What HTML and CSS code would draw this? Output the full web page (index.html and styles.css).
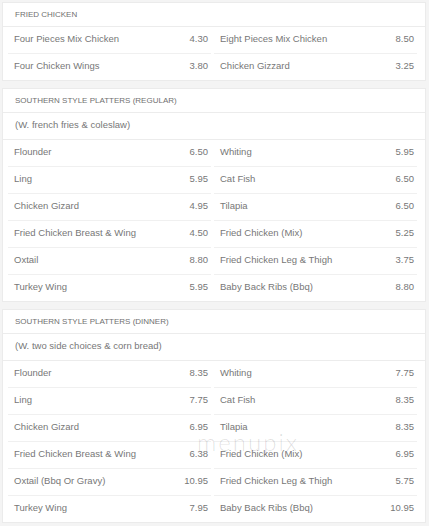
FILE: index.html
```html
<!DOCTYPE html>
<html lang="en">
<head>
    <meta charset="UTF-8">
    <meta name="viewport" content="width=device-width, initial-scale=1.0">
    <title>Menu</title>
    <link rel="stylesheet" href="styles.css">
</head>
<body>
    <div class="section">
        <div class="section-title">Fried Chicken</div>
        <div class="items">
            <div class="item"><span>Four Pieces Mix Chicken</span><span>4.30</span></div>
            <div class="item"><span>Eight Pieces Mix Chicken</span><span>8.50</span></div>
            <div class="item"><span>Four Chicken Wings</span><span>3.80</span></div>
            <div class="item"><span>Chicken Gizzard</span><span>3.25</span></div>
        </div>
    </div>

    <div class="section">
        <div class="section-title">Southern Style Platters (Regular)</div>
        <div class="note">(W. french fries &amp; coleslaw)</div>
        <div class="items">
            <div class="item"><span>Flounder</span><span>6.50</span></div>
            <div class="item"><span>Whiting</span><span>5.95</span></div>
            <div class="item"><span>Ling</span><span>5.95</span></div>
            <div class="item"><span>Cat Fish</span><span>6.50</span></div>
            <div class="item"><span>Chicken Gizard</span><span>4.95</span></div>
            <div class="item"><span>Tilapia</span><span>6.50</span></div>
            <div class="item"><span>Fried Chicken Breast &amp; Wing</span><span>4.50</span></div>
            <div class="item"><span>Fried Chicken (Mix)</span><span>5.25</span></div>
            <div class="item"><span>Oxtail</span><span>8.80</span></div>
            <div class="item"><span>Fried Chicken Leg &amp; Thigh</span><span>3.75</span></div>
            <div class="item"><span>Turkey Wing</span><span>5.95</span></div>
            <div class="item"><span>Baby Back Ribs (Bbq)</span><span>8.80</span></div>
        </div>
    </div>

    <div class="section">
        <div class="section-title">Southern Style Platters (Dinner)</div>
        <div class="note">(W. two side choices &amp; corn bread)</div>
        <div class="items">
            <div class="item"><span>Flounder</span><span>8.35</span></div>
            <div class="item"><span>Whiting</span><span>7.75</span></div>
            <div class="item"><span>Ling</span><span>7.75</span></div>
            <div class="item"><span>Cat Fish</span><span>8.35</span></div>
            <div class="item"><span>Chicken Gizard</span><span>6.95</span></div>
            <div class="item"><span>Tilapia</span><span>8.35</span></div>
            <div class="item"><span>Fried Chicken Breast &amp; Wing</span><span>6.38</span></div>
            <div class="item"><span>Fried Chicken (Mix)</span><span>6.95</span></div>
            <div class="item"><span>Oxtail (Bbq Or Gravy)</span><span>10.95</span></div>
            <div class="item"><span>Fried Chicken Leg &amp; Thigh</span><span>5.75</span></div>
            <div class="item"><span>Turkey Wing</span><span>7.95</span></div>
            <div class="item"><span>Baby Back Ribs (Bbq)</span><span>10.95</span></div>
        </div>
    </div>

    <div class="watermark">menupix</div>
</body>
</html>
```

FILE: styles.css
```css
body {
    font-family: "Liberation Sans", Arial, sans-serif;
    margin: 0;
    padding: 2px 3px 0 2px;
    background-color: #f4f4f4;
    color: #777;
    position: relative;
}

.section {
    background-color: white;
    border: 1px solid #ebebeb;
    margin-bottom: 7px;
}

.section-title {
    font-size: 8px;
    line-height: 10px;
    text-transform: uppercase;
    color: #707070;
    padding: 7px 12px 6px;
    border-bottom: 1px solid #ececec;
}

.note {
    font-size: 9.5px;
    line-height: 11px;
    padding: 6px 12px 9px;
    border-bottom: 1px solid #ececec;
}

.items {
    display: grid;
    grid-template-columns: 1fr 1fr;
    column-gap: 3px;
    padding: 0 8px 0 5px;
}

.item {
    display: flex;
    justify-content: space-between;
    font-size: 9.5px;
    line-height: 11px;
    padding: 6px 3px 9px 6px;
    border-bottom: 1px solid #f0f0f0;
}

.item:nth-last-child(-n+2) {
    border-bottom: none;
}

.watermark {
    position: absolute;
    left: 197px;
    top: 427px;
    font-family: "Lato", "Liberation Sans", sans-serif;
    font-weight: 300;
    font-size: 24px;
    letter-spacing: 2px;
    color: rgba(0, 0, 0, 0.12);
    pointer-events: none;
}
```
